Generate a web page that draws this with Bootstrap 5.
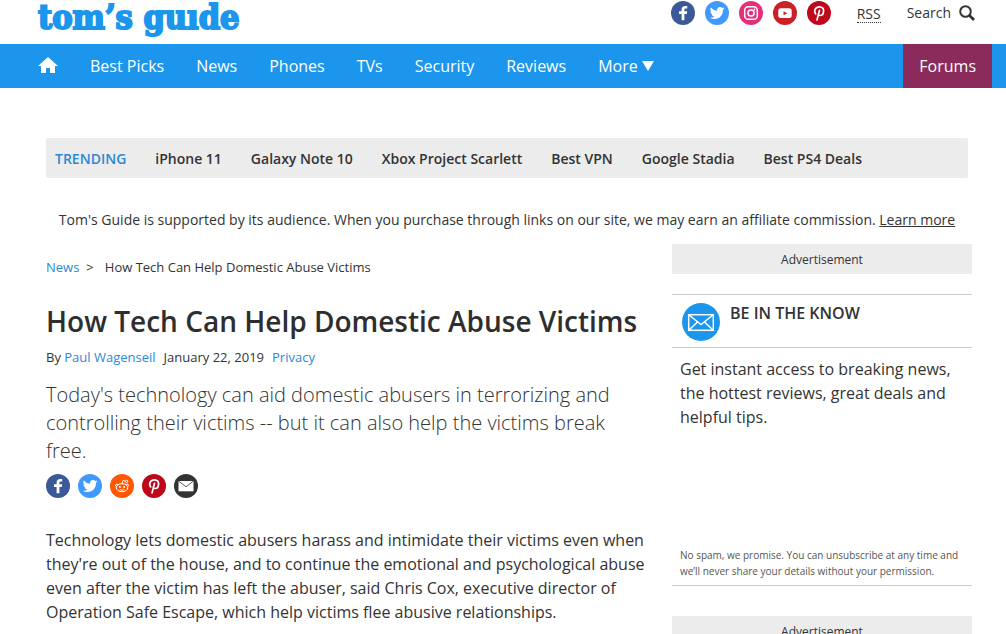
<!DOCTYPE html>
<html lang="en">
<head>
<meta charset="utf-8">
<meta name="viewport" content="width=device-width, initial-scale=1">
<title>How Tech Can Help Domestic Abuse Victims | Tom's Guide</title>
<link rel="stylesheet" href="https://cdn.jsdelivr.net/npm/bootstrap@5.3.0/dist/css/bootstrap.min.css">
<style>
  :root { --tg-blue: #1b96ec; --tg-link: #2d88d6; --tg-ink: #333; --tg-grey: #ececec; --tg-plum: #8a2b5c; }
  body { font-family: "Open Sans", sans-serif; font-size: 16px; line-height: 24px; color: var(--tg-ink); }
  a { color: var(--tg-link); text-decoration: none; }
  svg { display: block; }
  .masthead { height: 44px; padding: 0 31px 0 38px; }
  .logo { font: bold 34px/34px "DejaVu Serif Condensed", "DejaVu Serif", serif; color: var(--tg-blue); -webkit-text-stroke: 2px var(--tg-blue); }
  .tools { height: 26px; font-size: 14px; }
  .tools .rss { color: inherit; line-height: 16px; margin: 2px 26px 0; border-bottom: 1px dotted var(--tg-ink); }
  .socials { gap: 10px; }
  .search-btn { color: inherit; font-size: 14px; line-height: 26px; }
  .main-nav { background: var(--tg-blue); padding: 0 14px 0 22px; }
  .main-nav .nav-link { color: #fff; padding: 10px 16px; line-height: 24px; }
  .main-nav .forums { background: var(--tg-plum); }
  .page { padding: 50px 34px 0 46px; }
  .trending { background: var(--tg-grey); min-height: 40px; padding: 9px 9px 7px; margin-right: 4px; column-gap: 29px; font-size: 14px; font-weight: 600; border-radius: 2px; }
  .trending a { color: inherit; }
  .trending strong { font-weight: 600; color: var(--tg-link); }
  .support { font-size: 14px; padding-top: 30px; margin: 0 4px 12px 0; }
  .support a { color: inherit; text-decoration: underline; }
  .columns { gap: 26px; }
  .story { flex: 1 1 0; min-width: 0; }
  .crumbs, .byline { font-size: 13px; }
  .crumbs { padding-top: 11px; margin-bottom: 18px; gap: 7px; }
  .story h1 { font-size: 28px; line-height: 48px; font-weight: 600; margin: 0; color: #2e2e2e; }
  .byline { margin-bottom: 12px; gap: 8px; }
  .deck { font-size: 20px; line-height: 28px; font-weight: 300; margin-bottom: 9px; }
  .share { gap: 8px; margin-bottom: 30px; }
  .sidebar { flex: 0 0 300px; }
  .ad { background: var(--tg-grey); font-size: 12px; line-height: 20px; padding: 6px 0 4px; text-align: center; }
  .signup { margin: 20px 0 30px; border-top: 1px solid #ccc; border-bottom: 1px solid #ccc; }
  .signup-head { padding: 8px 10px 6px; gap: 10px; border-bottom: 1px solid #ccc; }
  .signup-head h2 { font-size: 16px; line-height: 20px; font-weight: 600; margin: 0; }
  .signup-body { padding: 9px 8px 0; min-height: 199px; }
  .fineprint { font-size: 10px; line-height: 16px; color: #555; padding: 0 8px 6px; margin: 0; }
</style>
</head>
<body>
<svg width="0" height="0" class="position-absolute" aria-hidden="true">
  <symbol id="fb" viewBox="0 0 24 24"><circle cx="12" cy="12" r="12" fill="#3b5998"/><path fill="#fff" d="M13.400 19.200v-6.300h2.400l.4-2.700h-2.800V8.700c0-.8.4-1.200 1.400-1.200h1.400V5.100c-.4-.1-1.200-.2-1.900-.2-2.400 0-3.700 1.300-3.700 3.500v1.800H8v2.700h2.600v6.300z"/></symbol>
  <symbol id="tw" viewBox="0 0 24 24"><circle cx="12" cy="12" r="12" fill="#4099ff"/><path fill="#fff" transform="translate(4.800 4.600) scale(.92)" d="M5 14.500c6 0 9.300-5 9.300-9.300v-.5A6.800 6.800 0 0 0 16 3a6.500 6.500 0 0 1-1.900.5A3.300 3.300 0 0 0 15.600 1.700a6.600 6.600 0 0 1-2.100.8A3.300 3.300 0 0 0 7.900 5.500 9.300 9.300 0 0 1 1.100 2.100a3.300 3.300 0 0 0 1 4.400A3.300 3.300 0 0 1 .600 6.100c0 1.600 1.100 3 2.700 3.300a3.300 3.300 0 0 1-1.500.1 3.300 3.300 0 0 0 3.100 2.300A6.600 6.600 0 0 1 0 13.100a9.300 9.300 0 0 0 5 1.400z"/></symbol>
  <symbol id="ig" viewBox="0 0 24 24"><circle cx="12" cy="12" r="12" fill="#e4307a"/><g fill="none" stroke="#fff" stroke-width="1.500"><rect x="5.700" y="5.700" width="12.600" height="12.600" rx="3.600"/><circle cx="12" cy="12" r="3.100"/></g><circle cx="15.500" cy="8.500" r=".9" fill="#fff"/></symbol>
  <symbol id="yt" viewBox="0 0 24 24"><circle cx="12" cy="12" r="12" fill="#cb2027"/><rect x="5.300" y="7.300" width="13.400" height="9.800" rx="2.500" fill="#fff"/><path fill="#cb2027" d="M10.500 10.200v4l3.900-2z"/></symbol>
  <symbol id="pin" viewBox="0 0 24 24"><circle cx="12" cy="12" r="12" fill="#bd081c"/><path fill="none" stroke="#fff" stroke-width="1.700" stroke-linecap="round" d="M8.700 12.900C6.300 9.800 8.600 5.800 12.400 5.800c3.100 0 4.400 2 4.200 4.300-.2 2.700-1.700 4.400-3.400 4.400-1.200 0-1.900-.8-1.800-1.600M12.500 9.300 10 19"/></symbol>
  <symbol id="rd" viewBox="0 0 24 24"><circle cx="12" cy="12" r="12" fill="#ff5700"/><g fill="none" stroke="#fff" stroke-width="1"><ellipse cx="12" cy="13.700" rx="5.700" ry="4"/><circle cx="16.500" cy="7.400" r="1.200"/><path d="M12 9.600l.9-3.100 2.400.6M6.500 12.700c-1.500-.6-1.300-2.500.3-2.500.7 0 1.200.4 1.400.8M17.500 12.700c1.500-.6 1.300-2.500-.3-2.500-.7 0-1.200.4-1.400.8M9.700 15.400c1.200 1 3.400 1 4.600 0"/></g><circle cx="9.900" cy="12.900" r="1" fill="#fff"/><circle cx="14.100" cy="12.900" r="1" fill="#fff"/></symbol>
  <symbol id="ml" viewBox="0 0 24 24"><circle cx="12" cy="12" r="12" fill="#333"/><rect x="4.500" y="7" width="15" height="10.300" fill="#fff"/><path fill="none" stroke="#333" stroke-width=".8" d="M4.500 7l7.500 5.800L19.500 7"/></symbol>
</svg>

<header>
  <div class="masthead d-flex justify-content-between align-items-start">
    <a class="logo" href="#">tom’s guıde</a>
    <div class="tools d-flex align-items-center">
      <div class="socials d-flex">
        <a href="#" aria-label="Facebook"><svg width="24" height="24"><use href="#fb"/></svg></a>
        <a href="#" aria-label="Twitter"><svg width="24" height="24"><use href="#tw"/></svg></a>
        <a href="#" aria-label="Instagram"><svg width="24" height="24"><use href="#ig"/></svg></a>
        <a href="#" aria-label="YouTube"><svg width="24" height="24"><use href="#yt"/></svg></a>
        <a href="#" aria-label="Pinterest"><svg width="24" height="24"><use href="#pin"/></svg></a>
      </div>
      <a class="rss" href="#">RSS</a>
      <button type="button" class="search-btn btn border-0 p-0 d-flex align-items-center gap-2">Search
        <svg width="16" height="16" viewBox="0 0 16 16" fill="none" stroke="#333"><circle cx="6.500" cy="6.500" r="5.300" stroke-width="2"/><path d="M10.300 10.300l4.700 4.700" stroke-width="2.800"/></svg>
      </button>
    </div>
  </div>
  <nav class="main-nav d-flex justify-content-between" aria-label="Main">
    <div class="nav">
      <a class="nav-link" href="#" aria-label="Home"><svg width="20" height="24" viewBox="0 0 20 24"><path fill="#fff" d="M10 3 0 12h3v7h5v-5h4v5h5v-7h3z"/></svg></a>
      <a class="nav-link" href="#">Best Picks</a>
      <a class="nav-link" href="#">News</a>
      <a class="nav-link" href="#">Phones</a>
      <a class="nav-link" href="#">TVs</a>
      <a class="nav-link" href="#">Security</a>
      <a class="nav-link" href="#">Reviews</a>
      <a class="nav-link d-flex align-items-center gap-1" href="#">More <svg width="12" height="10" viewBox="0 0 12 10"><path fill="#fff" d="M0 0h12L6 10z"/></svg></a>
    </div>
    <a class="nav-link forums" href="#">Forums</a>
  </nav>
</header>

<div class="page">
  <div class="trending d-flex flex-wrap align-items-center">
    <strong>TRENDING</strong>
    <a href="#">iPhone 11</a>
    <a href="#">Galaxy Note 10</a>
    <a href="#">Xbox Project Scarlett</a>
    <a href="#">Best VPN</a>
    <a href="#">Google Stadia</a>
    <a href="#">Best PS4 Deals</a>
  </div>
  <p class="support text-center">Tom's Guide is supported by its audience. When you purchase through links on our site, we may earn an affiliate commission. <a href="#">Learn more</a></p>

  <div class="columns d-flex align-items-start">
    <main class="story">
      <nav class="crumbs d-flex" aria-label="Breadcrumb"><a href="#">News</a><span class="me-1">&gt;</span><span>How Tech Can Help Domestic Abuse Victims</span></nav>
      <h1>How Tech Can Help Domestic Abuse Victims</h1>
      <div class="byline d-flex"><span>By <a href="#">Paul Wagenseil</a></span><time datetime="2019-01-22">January 22, 2019</time><a href="#">Privacy</a></div>
      <p class="deck">Today's technology can aid domestic abusers in terrorizing and controlling their victims -- but it can also help the victims break free.</p>
      <div class="share d-flex">
        <a href="#" aria-label="Share on Facebook"><svg width="24" height="24"><use href="#fb"/></svg></a>
        <a href="#" aria-label="Share on Twitter"><svg width="24" height="24"><use href="#tw"/></svg></a>
        <a href="#" aria-label="Share on Reddit"><svg width="24" height="24"><use href="#rd"/></svg></a>
        <a href="#" aria-label="Share on Pinterest"><svg width="24" height="24"><use href="#pin"/></svg></a>
        <a href="#" aria-label="Share by email"><svg width="24" height="24"><use href="#ml"/></svg></a>
      </div>
      <p class="mb-0">Technology lets domestic abusers harass and intimidate their victims even when they're out of the house, and to continue the emotional and psychological abuse even after the victim has left the abuser, said Chris Cox, executive director of Operation Safe Escape, which help victims flee abusive relationships.</p>
    </main>
    <aside class="sidebar">
      <div class="ad">Advertisement</div>
      <section class="signup">
        <div class="signup-head d-flex align-items-start">
          <svg width="38" height="38" viewBox="0 0 38 38"><circle cx="19" cy="19" r="19" fill="#1b96ec"/><g fill="none" stroke="#fff" stroke-width="1.500"><rect x="6.700" y="11.700" width="24.600" height="15.600"/><path d="M7 12l12 9.500L31 12M7 27l8.500-8M31 27l-8.500-8"/></g></svg>
          <h2>BE IN THE KNOW</h2>
        </div>
        <div class="signup-body">Get instant access to breaking news, the hottest reviews, great deals and helpful tips.</div>
        <p class="fineprint">No spam, we promise. You can unsubscribe at any time and we’ll never share your details without your permission.</p>
      </section>
      <div class="ad">Advertisement</div>
    </aside>
  </div>
</div>
<script src="https://cdn.jsdelivr.net/npm/bootstrap@5.3.0/dist/js/bootstrap.bundle.min.js"></script>
</body>
</html>
